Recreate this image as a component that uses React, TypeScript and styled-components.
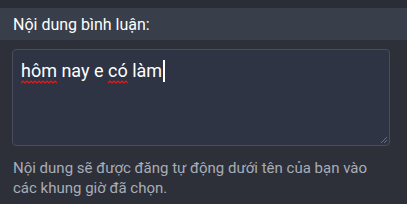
import React, { FC } from 'react';
import styled, { createGlobalStyle } from 'styled-components';

const Global = createGlobalStyle`
    html, body {
        margin:0;
        padding:0;
        background:#2d3039;
    }
    body {
        font-family:Roboto, "Noto Sans", sans-serif;
    }
`;

const Page = styled.div`
    width:407px;
    height:204px;
    display:flex;
    flex-direction:column;
    background:#2d3039;
    border-top:8px solid #2a2d35;
    box-sizing:border-box;
`;

const LabelBar = styled.div`
    height:32px;
    box-sizing:border-box;
    padding:0 13px;
    display:flex;
    align-items:center;
    background:#393e4b;
    color:#ffffff;
    font-size:16px;
`;

const Body = styled.div`
    padding:9px 17px 0 12px;
    display:flex;
    flex-direction:column;
`;

const Area = styled.div`
    position:relative;
    height:97px;
    box-sizing:border-box;
    border:1px solid #484d5b;
    border-radius:4px;
    background:#2e3444;
    padding:9px 8px;
    color:#ffffff;
    font-size:18px;
    line-height:24px;
`;

const Word = styled.span`
    position:relative;
`;

const Squiggle = styled.svg`
    position:absolute;
    left:0;
    bottom:-3px;
    width:100%;
    height:4px;
`;

const Caret = styled.span`
    display:inline-block;
    width:1.5px;
    height:22px;
    background:#ffffff;
    vertical-align:-5px;
    margin-left:1px;
`;

const Grip = styled.svg`
    position:absolute;
    right:1px;
    bottom:1px;
`;

const Hint = styled.p`
    margin:12px 0 0 1px;
    color:#a8adb8;
    font-size:15px;
    line-height:20px;
`;

const Typo: FC<{ id: string; children: React.ReactNode }> = (props) => {
    return (
        <Word>
            {props.children}
            <Squiggle>
                <defs>
                    <pattern id={props.id} width="4" height="4" patternUnits="userSpaceOnUse">
                        <path d="M0 3L2 1L4 3" fill="none" stroke="#f01818" strokeWidth="1.1" />
                    </pattern>
                </defs>
                <rect width="100%" height="4" fill={`url(#${props.id})`} />
            </Squiggle>
        </Word>
    );
};

export default function App() {
    return (
        <>
            <Global />
            <Page>
                <LabelBar>Nội dung bình luận:</LabelBar>
                <Body>
                    <Area>
                        <Typo id="sq1">hôm</Typo> nay e <Typo id="sq2">có</Typo> làm<Caret />
                        <Grip width="8" height="8" viewBox="0 0 8 8">
                            <path d="M7 1L1 7M7 4L4 7" stroke="#6a6f7c" strokeWidth="1" />
                        </Grip>
                    </Area>
                    <Hint>Nội dung sẽ được đăng tự động dưới tên của bạn vào các khung giờ đã chọn.</Hint>
                </Body>
            </Page>
        </>
    );
}
